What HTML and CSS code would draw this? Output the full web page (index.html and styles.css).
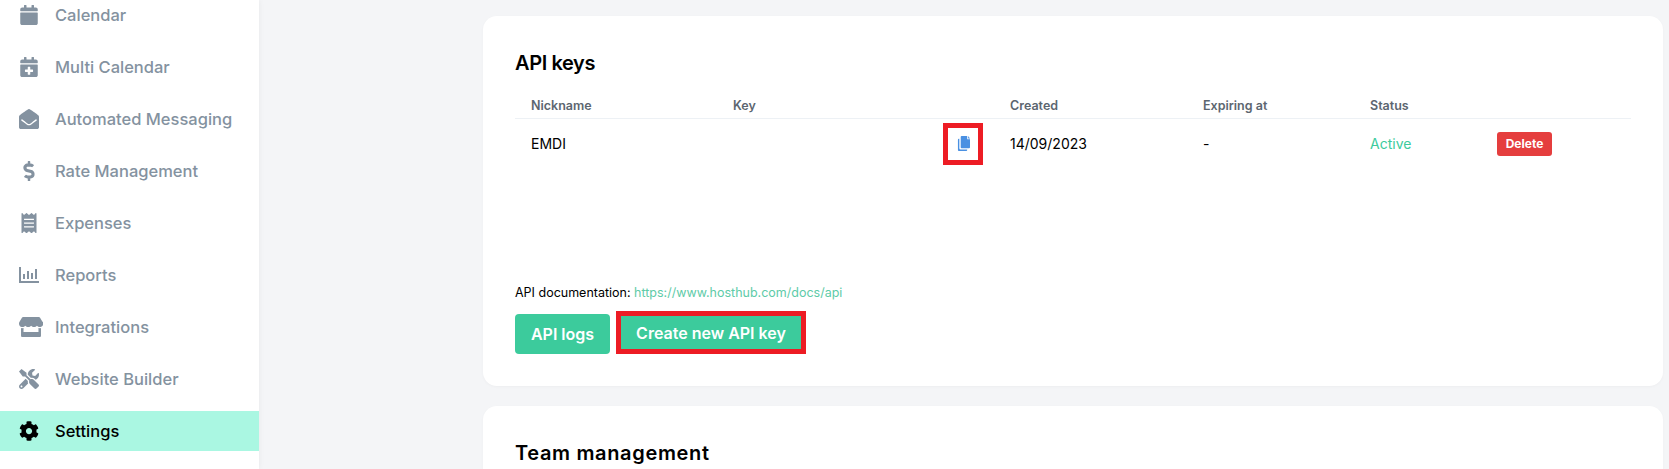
FILE: index.html
```html
<!DOCTYPE html>
<html lang="en">
<head>
    <meta charset="UTF-8">
    <title>Settings</title>
    <link rel="stylesheet" href="styles.css">
</head>
<body>
    <!-- Sidebar -->
    <nav class="sidebar">
        <a class="nav-item">
            <svg class="nav-icon" viewBox="0 0 448 512"><path d="M12 192h424c6.6 0 12 5.4 12 12v260c0 26.5-21.5 48-48 48H48c-26.5 0-48-21.5-48-48V204c0-6.6 5.4-12 12-12zm436-44v-36c0-26.5-21.5-48-48-48h-48V12c0-6.6-5.4-12-12-12h-40c-6.6 0-12 5.4-12 12v52H160V12c0-6.6-5.4-12-12-12h-40c-6.6 0-12 5.4-12 12v52H48C21.5 64 0 85.5 0 112v36c0 6.6 5.4 12 12 12h424c6.6 0 12-5.4 12-12z"/></svg>
            Calendar
        </a>
        <a class="nav-item">
            <svg class="nav-icon" viewBox="0 0 448 512"><path d="M436 160H12c-6.6 0-12-5.4-12-12v-36c0-26.5 21.5-48 48-48h48V12c0-6.6 5.4-12 12-12h40c6.6 0 12 5.4 12 12v52h128V12c0-6.6 5.4-12 12-12h40c6.6 0 12 5.4 12 12v52h48c26.5 0 48 21.5 48 48v36c0 6.6-5.4 12-12 12zM12 192h424c6.6 0 12 5.4 12 12v260c0 26.5-21.5 48-48 48H48c-26.5 0-48-21.5-48-48V204c0-6.6 5.4-12 12-12zm316 140c0-6.6-5.4-12-12-12h-60v-60c0-6.6-5.4-12-12-12h-40c-6.6 0-12 5.4-12 12v60h-60c-6.6 0-12 5.4-12 12v40c0 6.6 5.4 12 12 12h60v60c0 6.6 5.4 12 12 12h40c6.6 0 12-5.4 12-12v-60h60c6.6 0 12-5.4 12-12v-40z"/></svg>
            Multi Calendar
        </a>
        <a class="nav-item">
            <svg class="nav-icon" viewBox="0 0 512 512"><path d="M512 464c0 26.51-21.49 48-48 48H48c-26.51 0-48-21.49-48-48V200.724a48 48 0 0 1 18.387-37.776c24.913-19.529 45.501-35.365 164.2-121.511C199.412 29.17 232.797-.347 256 .003c23.198-.354 56.596 29.172 73.413 41.433 118.687 86.137 139.303 101.995 164.2 121.512A48 48 0 0 1 512 200.724V464zm-65.666-196.605c-2.563-3.728-7.7-4.595-11.339-1.907-22.845 16.873-55.462 40.705-105.582 77.079-16.825 12.266-50.21 41.781-73.413 41.43-23.211.344-56.559-29.143-73.413-41.43-50.114-36.37-82.734-60.204-105.582-77.079-3.639-2.688-8.776-1.821-11.339 1.907l-9.072 13.196a7.998 7.998 0 0 0 1.839 10.967c22.887 16.899 55.454 40.69 105.303 76.868 20.274 14.781 56.524 47.813 92.264 47.573 35.724.242 71.961-32.771 92.263-47.573 49.85-36.179 82.418-59.97 105.303-76.868a7.998 7.998 0 0 0 1.839-10.967l-9.071-13.196z"/></svg>
            Automated Messaging
        </a>
        <a class="nav-item">
            <svg class="nav-icon" viewBox="0 0 288 512"><path d="M209.2 233.4l-108-31.6C88.7 198.2 80 186.5 80 173.5c0-16.3 13.2-29.5 29.5-29.5h66.3c12.2 0 24.2 3.7 34.2 10.5 6.1 4.1 14.3 3.1 19.5-2l34.8-34c7.1-6.9 6.1-18.4-1.8-24.5C238 74.8 207.4 64.1 176 64V16c0-8.8-7.2-16-16-16h-32c-8.8 0-16 7.2-16 16v48h-2.5C45.8 64-5.4 118.7.5 183.6c4.2 46.1 39.4 83.6 83.8 96.6l102.5 30c12.5 3.7 21.2 15.3 21.2 28.3 0 16.3-13.2 29.5-29.5 29.5h-66.3C100 368 88 364.3 78 357.5c-6.1-4.1-14.3-3.1-19.5 2l-34.8 34c-7.1 6.9-6.1 18.4 1.8 24.5 24.5 19.2 55.1 29.9 86.5 30v48c0 8.8 7.2 16 16 16h32c8.8 0 16-7.2 16-16v-48.2c46.6-.9 90.3-28.6 105.7-72.7 21.5-61.6-14.6-124.8-72.5-141.7z"/></svg>
            Rate Management
        </a>
        <a class="nav-item">
            <svg class="nav-icon" viewBox="0 0 384 512"><path d="M358.4 3.2L320 48 265.6 3.2a15.9 15.9 0 0 0-19.2 0L192 48 137.6 3.2a15.9 15.9 0 0 0-19.2 0L64 48 25.6 3.2C15-4.7 0 2.8 0 16v480c0 13.2 15 20.7 25.6 12.8L64 464l54.4 44.8a15.9 15.9 0 0 0 19.2 0L192 464l54.4 44.8a15.9 15.9 0 0 0 19.2 0L320 464l38.4 44.8c10.5 7.9 25.6.4 25.6-12.8V16c0-13.2-15-20.7-25.6-12.8zM320 360c0 4.4-3.6 8-8 8H72c-4.4 0-8-3.6-8-8v-16c0-4.4 3.6-8 8-8h240c4.4 0 8 3.6 8 8v16zm0-96c0 4.4-3.6 8-8 8H72c-4.4 0-8-3.6-8-8v-16c0-4.4 3.6-8 8-8h240c4.4 0 8 3.6 8 8v16zm0-96c0 4.4-3.6 8-8 8H72c-4.4 0-8-3.6-8-8v-16c0-4.4 3.6-8 8-8h240c4.4 0 8 3.6 8 8v16z"/></svg>
            Expenses
        </a>
        <a class="nav-item">
            <svg class="nav-icon" viewBox="0 0 20 20"><path d="M0 2h2v14h18v2H0zM4 9h2v5H4zM8 6h2v8H8zM12 8h2v6h-2zM16 4h2v10h-2z"/></svg>
            Reports
        </a>
        <a class="nav-item">
            <svg class="nav-icon nav-icon-wide" viewBox="0 0 616 512"><path d="M602 118.6L537.1 15C531.3 5.7 521 0 510 0H106C95 0 84.7 5.7 78.9 15L14 118.6c-33.9 54.1-3.9 129.3 59.4 137.9 4.6.6 9.2.9 13.7.9 29.9 0 56.4-13.1 74.8-33.4 18.4 20.3 45 33.4 74.8 33.4 29.9 0 56.4-13.1 74.8-33.4 18.4 20.3 45 33.4 74.8 33.4 29.9 0 56.4-13.1 74.8-33.4 18.5 20.3 45 33.4 74.8 33.4 4.6 0 9.1-.3 13.7-.9 63.5-8.5 93.6-83.7 59.6-137.9zM529.5 288c-10 0-19.9-1.5-29.5-3.8V384H116v-99.8c-9.6 2.2-19.5 3.8-29.5 3.8-6 0-12.1-.4-18-1.2-5.6-.8-11.1-2.1-16.4-3.6V480c0 17.7 14.3 32 32 32h448c17.7 0 32-14.3 32-32V283.2c-5.4 1.6-10.8 2.9-16.4 3.6-6.1.8-12.1 1.2-18.2 1.2z"/></svg>
            Integrations
        </a>
        <a class="nav-item">
            <svg class="nav-icon" viewBox="0 0 512 512"><path d="M501.1 395.7L384 278.6c-23.1-23.1-57.6-27.6-85.4-13.9L192 158.1V96L64 0 0 64l96 128h62.1l106.6 106.6c-13.6 27.8-9.2 62.3 13.9 85.4l117.1 117.1c14.6 14.6 38.2 14.6 52.7 0l52.7-52.7c14.5-14.6 14.5-38.2 0-52.7zM331.7 225c28.3 0 54.9 11 74.9 31l19.4 19.4c15.8-6.9 30.8-16.5 43.8-29.5 37.1-37.1 49.7-89.3 37.9-136.7-2.2-9-13.5-12.1-20.1-5.5l-74.4 74.4-67.9-11.3L334 98.9l74.4-74.4c6.6-6.6 3.4-17.9-5.7-20.2-47.4-11.7-99.6.9-136.6 37.9-28.5 28.5-41.9 66.1-41.2 103.6l82.1 82.1c8.1-1.9 16.5-2.9 24.7-2.9zm-103.9 82l-56.7-56.7L18.7 402.8c-25 25-25 65.5 0 90.5s65.5 25 90.5 0l123.6-123.6c-7.6-19.9-9.9-41.6-5-62.7zM64 472c-13.2 0-24-10.8-24-24 0-13.3 10.7-24 24-24s24 10.7 24 24c0 13.2-10.7 24-24 24z"/></svg>
            Website Builder
        </a>
        <a class="nav-item active">
            <svg class="nav-icon" viewBox="0 0 512 512"><path d="M487.4 315.7l-42.6-24.6c4.3-23.2 4.3-47 0-70.2l42.6-24.6c4.9-2.8 7.1-8.6 5.5-14-11.1-35.6-30-67.8-54.7-94.6-3.8-4.1-10-5.1-14.8-2.3L380.8 110c-17.9-15.4-38.5-27.3-60.8-35.1V25.8c0-5.6-3.9-10.5-9.4-11.7-36.7-8.2-74.3-7.8-109.2 0-5.5 1.2-9.4 6.1-9.4 11.7V75c-22.2 7.9-42.8 19.8-60.8 35.1L88.7 85.5c-4.9-2.8-11-1.9-14.8 2.3-24.7 26.7-43.6 58.9-54.7 94.6-1.7 5.4.6 11.2 5.5 14L67.3 221c-4.3 23.2-4.3 47 0 70.2l-42.6 24.6c-4.9 2.8-7.1 8.6-5.5 14 11.1 35.6 30 67.8 54.7 94.6 3.8 4.1 10 5.1 14.8 2.3l42.6-24.6c17.9 15.4 38.5 27.3 60.8 35.1v49.2c0 5.6 3.9 10.5 9.4 11.7 36.7 8.2 74.3 7.8 109.2 0 5.5-1.2 9.4-6.1 9.4-11.7v-49.2c22.2-7.9 42.8-19.8 60.8-35.1l42.6 24.6c4.9 2.8 11 1.9 14.8-2.3 24.7-26.7 43.6-58.9 54.7-94.6 1.5-5.5-.7-11.3-5.6-14.1zM256 336c-44.1 0-80-35.9-80-80s35.9-80 80-80 80 35.9 80 80-35.9 80-80 80z"/></svg>
            Settings
        </a>
    </nav>

    <!-- Main Content -->
    <main class="content">
        <section class="card">
            <h2 class="title-keys">API keys</h2>
            <table class="keys-table">
                <colgroup>
                    <col class="col-name">
                    <col class="col-key">
                    <col class="col-created">
                    <col class="col-expiring">
                    <col class="col-status">
                    <col>
                </colgroup>
                <thead>
                    <tr>
                        <th>Nickname</th>
                        <th>Key</th>
                        <th>Created</th>
                        <th>Expiring at</th>
                        <th>Status</th>
                        <th></th>
                    </tr>
                </thead>
                <tbody>
                    <tr>
                        <td>EMDI</td>
                        <td class="key-cell">
                            <span class="copy-box">
                                <svg class="copy-icon" viewBox="0 0 14 16"><path d="M5 0h6v3.500h3V12a1 1 0 0 1-1 1H5a1 1 0 0 1-1-1V1a1 1 0 0 1 1-1zM12 0l2 2.500h-2zM2.500 3v10a1.500 1.500 0 0 0 1.500 1.500h7V15a1 1 0 0 1-1 1H2a1 1 0 0 1-1-1V4a1 1 0 0 1 1-1z"/></svg>
                            </span>
                        </td>
                        <td>14/09/2023</td>
                        <td>-</td>
                        <td class="status-active">Active</td>
                        <td><button class="btn-delete" type="button">Delete</button></td>
                    </tr>
                </tbody>
            </table>
            <p class="docs">API documentation: <a>https://www.hosthub.com/docs/api</a></p>
            <div class="button-row">
                <button class="btn" type="button">API logs</button>
                <button class="btn btn-marked" type="button">Create new API key</button>
            </div>
        </section>
        <section class="card card-team">
            <h2 class="title-team">Team management</h2>
        </section>
    </main>
</body>
</html>
```

FILE: styles.css
```css
/* Basic Reset */
* {
    margin: 0;
    padding: 0;
    box-sizing: border-box;
}

body {
    font-family: 'Inter', sans-serif;
    background-color: #f4f5f7;
    color: #000;
    height: 469px;
    overflow: hidden;
    display: flex;
}

/* Sidebar */
.sidebar {
    width: 259px;
    flex-shrink: 0;
    background-color: #fff;
    display: flex;
    flex-direction: column;
    gap: 12px;
    height: 469px;
    overflow: hidden;
    box-shadow: 0 0 6px rgba(0, 0, 0, 0.06);
}

.nav-item {
    height: 40px;
    flex-shrink: 0;
    display: flex;
    align-items: center;
    padding: 0 0 1px 55px;
    position: relative;
    font-size: 16.5px;
    font-weight: 500;
    color: #8492a0;
}

.nav-item:first-child {
    margin-top: -5px;
}

.nav-item.active {
    background-color: #aaf7e2;
    color: #000;
}

.nav-icon {
    position: absolute;
    left: 19px;
    top: 10px;
    width: 20px;
    height: 20px;
    fill: #8492a0;
}

.nav-icon-wide {
    width: 24px;
}

.nav-item.active .nav-icon {
    fill: #000;
}

/* Main Content */
.content {
    flex: 1;
    height: 469px;
    overflow: hidden;
    padding: 16px 6px 0 224px;
    display: flex;
    flex-direction: column;
    gap: 20px;
}

.card {
    background-color: #fff;
    border-radius: 14px;
    padding: 35px 32px 0 32px;
    height: 370px;
    flex-shrink: 0;
    box-shadow: 0 1px 3px rgba(0, 0, 0, 0.03);
}

.card-team {
    height: 63px;
    padding-top: 35px;
    border-radius: 14px 14px 0 0;
}

h2 {
    font-size: 20px;
    font-weight: 600;
    line-height: 24px;
}

.title-keys {
    letter-spacing: -0.4px;
}

.title-team {
    letter-spacing: 0.65px;
}

.keys-table {
    width: 100%;
    table-layout: fixed;
    border-collapse: collapse;
    margin-top: 22px;
}

.col-name { width: 202px; }
.col-key { width: 277px; }
.col-created { width: 193px; }
.col-expiring { width: 167px; }
.col-status { width: 127px; }

th {
    text-align: left;
    font-size: 12.5px;
    font-weight: 600;
    color: #5c6670;
    padding: 1px 0 0 16px;
    height: 21px;
    vertical-align: top;
    border-bottom: 1px solid #edf1f5;
}

td {
    font-size: 14px;
    padding-left: 16px;
    height: 51px;
}

.key-cell {
    text-align: right;
    padding-right: 11px;
}

.copy-box {
    display: inline-flex;
    width: 40px;
    height: 42px;
    border: 5px solid #ed1c24;
    align-items: center;
    justify-content: center;
    vertical-align: middle;
}

.copy-icon {
    width: 13px;
    height: 15px;
    fill: #4a90e2;
}

.status-active {
    color: #3ccb9c;
}

.btn-delete {
    background-color: #e53e3e;
    color: #fff;
    border: none;
    border-radius: 3px;
    width: 55px;
    height: 24px;
    font-family: inherit;
    font-size: 12px;
    font-weight: 700;
}

.docs {
    font-size: 12.5px;
    margin-top: 116px;
}

.docs a {
    color: #5ecba8;
}

.button-row {
    display: flex;
    align-items: flex-end;
    margin-top: 11px;
    height: 43px;
}

.btn {
    height: 40px;
    width: 95px;
    background-color: #3ccb9c;
    color: #fff;
    border: none;
    border-radius: 4px;
    font-family: inherit;
    font-size: 16px;
    font-weight: 600;
}

.btn-marked {
    width: 180px;
    height: 33px;
    margin-left: 11px;
    margin-bottom: 5px;
    border-radius: 0;
    outline: 5px solid #ed1c24;
}
```
